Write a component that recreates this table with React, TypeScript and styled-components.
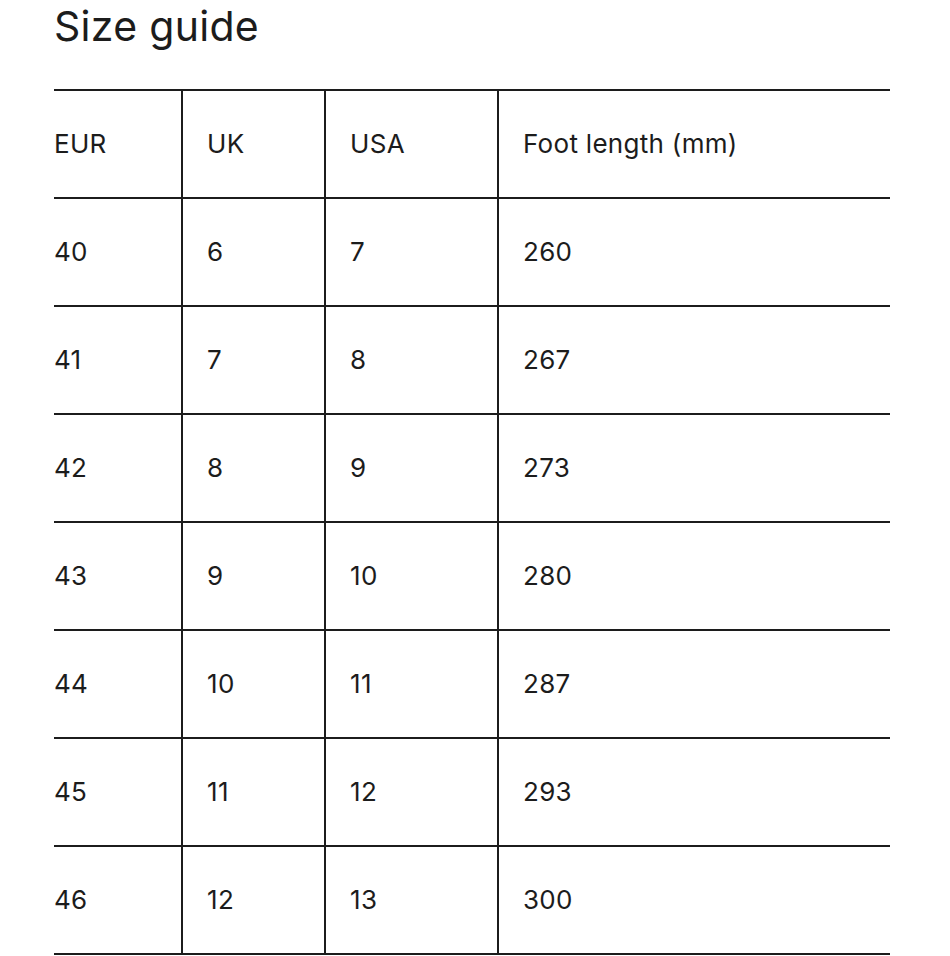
import React from "react";
import styled, { createGlobalStyle } from "styled-components";

const GlobalStyle = createGlobalStyle`
  html, body {
    margin: 0;
    padding: 0;
    background: #ffffff;
  }
  body {
    font-family: Inter, "Noto Sans", Roboto, sans-serif;
    color: #1c1c1c;
  }
`;

const Page = styled.div`
  padding: 0 60px 0 54px;
  width: 836px;
`;

const Title = styled.h1`
  margin: 0;
  padding-top: 2px;
  height: 87px;
  font-size: 41px;
  font-weight: 400;
  line-height: 48px;
  letter-spacing: 0.3px;
  color: #1c1c1c;
`;

const Table = styled.table`
  width: 836px;
  border-collapse: collapse;
  table-layout: fixed;
  border-top: 2px solid #1c1c1c;
`;

const Row = styled.tr`
  height: 108px;
  border-bottom: 2px solid #1c1c1c;
`;

const Cell = styled.td<{ $first?: boolean }>`
  padding: 0 0 0 ${(p) => (p.$first ? "0" : "24px")};
  border-left: ${(p) => (p.$first ? "none" : "2px solid #1c1c1c")};
  font-size: 26px;
  font-weight: 400;
  line-height: 32px;
  letter-spacing: 0.3px;
  vertical-align: middle;
  text-align: left;
  color: #1c1c1c;
`;

const widths = [128, 143, 173, 392];

const header = ["EUR", "UK", "USA", "Foot length (mm)"];
const rows = [
  ["40", "6", "7", "260"],
  ["41", "7", "8", "267"],
  ["42", "8", "9", "273"],
  ["43", "9", "10", "280"],
  ["44", "10", "11", "287"],
  ["45", "11", "12", "293"],
  ["46", "12", "13", "300"],
];

export default function App() {
  return (
    <>
      <GlobalStyle />
      <Page>
        <Title>Size guide</Title>
        <Table>
          <colgroup>
            {widths.map((w, i) => (
              <col key={i} style={{ width: w }} />
            ))}
          </colgroup>
          <tbody>
            <Row>
              {header.map((h, i) => (
                <Cell key={i} $first={i === 0}>
                  {h}
                </Cell>
              ))}
            </Row>
            {rows.map((r, ri) => (
              <Row key={ri}>
                {r.map((c, i) => (
                  <Cell key={i} $first={i === 0}>
                    {c}
                  </Cell>
                ))}
              </Row>
            ))}
          </tbody>
        </Table>
      </Page>
    </>
  );
}
